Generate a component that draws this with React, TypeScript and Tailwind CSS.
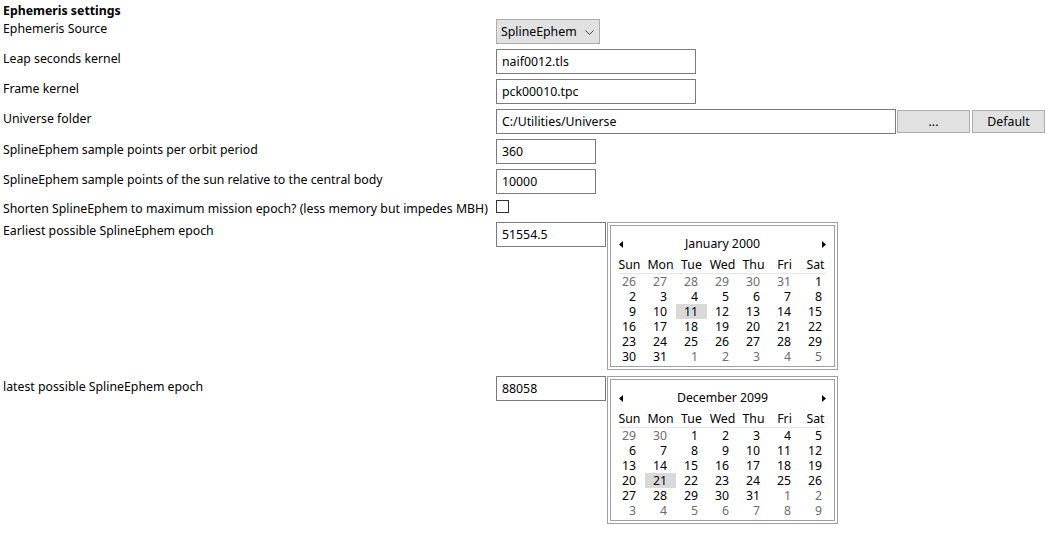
import React from "react";

const DAYS = ["Sun", "Mon", "Tue", "Wed", "Thu", "Fri", "Sat"];

type Cell = { d: number; muted?: boolean; sel?: boolean };

function buildMonth(prevStart: number, prevEnd: number, len: number, sel: number): Cell[] {
  const cells: Cell[] = [];
  for (let d = prevStart; d <= prevEnd; d++) cells.push({ d, muted: true });
  for (let d = 1; d <= len; d++) cells.push({ d, sel: d === sel });
  let n = 1;
  while (cells.length < 42) cells.push({ d: n++, muted: true });
  return cells;
}

function Arrow({ dir }: { dir: "left" | "right" }) {
  return (
    <svg width="4" height="7" viewBox="0 0 4 7">
      {dir === "left" ? <path d="M4 0 L0 3.5 L4 7 Z" fill="#000" /> : <path d="M0 0 L4 3.5 L0 7 Z" fill="#000" />}
    </svg>
  );
}

function Calendar({ title, cells }: { title: string; cells: Cell[] }) {
  return (
    <div className="ml-px w-[231px] h-[148px] border border-[#a0a0a0] p-[2px] bg-white">
      <div className="h-full border border-[#a0a0a0] pt-[6px]">
        <div className="flex h-[24px] items-center justify-between px-[8px]">
          <Arrow dir="left" />
          <span className="text-black">{title}</span>
          <Arrow dir="right" />
        </div>
        <div className="ml-[3px] w-[217px]">
          <div className="grid h-[17px] grid-cols-7 items-center">
            {DAYS.map((d) => (
              <span key={d} className="text-center">{d}</span>
            ))}
          </div>
          <div className="mx-[5px] h-px bg-[#e6e6e6]" />
          <div className="grid grid-cols-7">
            {cells.map((c, i) => (
              <span
                key={i}
                className={
                  "h-[15px] pr-[9px] text-right leading-[15px] " +
                  (c.muted ? "text-[#6d6d6d] " : "text-black ") +
                  (c.sel ? "bg-[#d9d9d9]" : "")
                }
              >
                {c.d}
              </span>
            ))}
          </div>
        </div>
      </div>
    </div>
  );
}

function TextBox({ value, w }: { value: string; w: string }) {
  return (
    <div className={"flex h-[25px] items-center border border-[#7a7a7a] bg-white pl-[5px] pt-[2px] " + w}>
      {value}
    </div>
  );
}

function Label({ children, pt = "pt-[2px]" }: { children: React.ReactNode; pt?: string }) {
  return <div className={"w-[493px] shrink-0 leading-4 " + pt}>{children}</div>;
}

export default function App() {
  const jan = buildMonth(26, 31, 31, 11);
  const dec = buildMonth(29, 30, 31, 21);

  return (
    <div
      className="h-[541px] w-[1058px] bg-white pl-[3px] pt-[2px] text-[12.3px] text-black"
      style={{ fontFamily: '"Noto Sans", "Open Sans", sans-serif' }}
    >
      <div className="h-[17px] pt-px font-bold leading-4">Ephemeris settings</div>

      <div className="flex h-[30px]">
        <Label>Ephemeris Source</Label>
        <div className="flex h-[25px] w-[104px] items-center justify-between border border-[#adadad] bg-[#e1e1e1] pl-[4px] pr-[5px] pt-px">
          <span>SplineEphem</span>
          <svg width="9" height="5" viewBox="0 0 9 5">
            <path d="M0.5 0.5 L4.5 4.5 L8.5 0.5" fill="none" stroke="#444" strokeWidth="1" />
          </svg>
        </div>
      </div>

      <div className="flex h-[30px]">
        <Label>Leap seconds kernel</Label>
        <TextBox value="naif0012.tls" w="w-[200px]" />
      </div>

      <div className="flex h-[30px]">
        <Label>Frame kernel</Label>
        <TextBox value="pck00010.tpc" w="w-[200px]" />
      </div>

      <div className="flex h-[30px]">
        <Label>Universe folder</Label>
        <TextBox value="C:/Utilities/Universe" w="w-[400px]" />
        <button className="ml-[1px] mt-px h-[23px] w-[73px] border border-[#adadad] bg-[#e1e1e1] pt-px leading-4">...</button>
        <button className="ml-[2px] mt-px h-[23px] w-[73px] border border-[#adadad] bg-[#e1e1e1] pt-px leading-4">Default</button>
      </div>

      <div className="flex h-[30px]">
        <Label pt="pt-[3px]">SplineEphem sample points per orbit period</Label>
        <TextBox value="360" w="w-[100px]" />
      </div>

      <div className="flex h-[30px]">
        <Label pt="pt-[3px]">SplineEphem sample points of the sun relative to the central body</Label>
        <TextBox value="10000" w="w-[100px]" />
      </div>

      <div className="flex h-[23px]">
        <Label pt="pt-[2px]">Shorten SplineEphem to maximum mission epoch? (less memory but impedes MBH)</Label>
        <div className="mt-px h-[13px] w-[13px] border border-[#333333] bg-white" />
      </div>

      <div className="flex h-[154px]">
        <Label pt="pt-[1px]">Earliest possible SplineEphem epoch</Label>
        <TextBox value="51554.5" w="w-[110px]" />
        <Calendar title="January 2000" cells={jan} />
      </div>

      <div className="flex">
        <Label pt="pt-[3px]">latest possible SplineEphem epoch</Label>
        <TextBox value="88058" w="w-[110px]" />
        <Calendar title="December 2099" cells={dec} />
      </div>
    </div>
  );
}
